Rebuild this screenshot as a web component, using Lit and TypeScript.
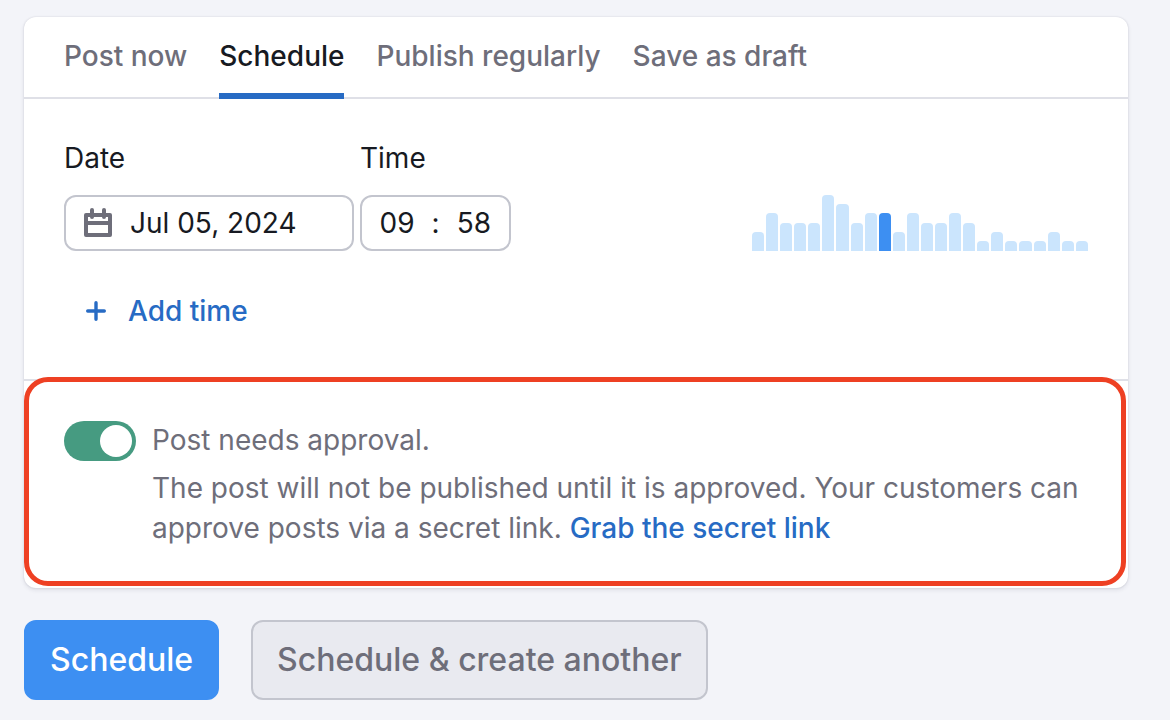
import { LitElement, html, css, svg } from "lit";
import { customElement, state } from "lit/decorators.js";
import { classMap } from "lit/directives/class-map.js";
import { styleMap } from "lit/directives/style-map.js";

const TABS = ["Post now", "Schedule", "Publish regularly", "Save as draft"];

/* Audience activity for each hour of the day, in pixels of bar height. */
const ACTIVITY = [
  19, 38, 28, 28, 28, 56, 47, 28, 38, 38, 19, 38,
  28, 28, 38, 28, 10, 19, 10, 10, 10, 19, 10, 10,
];

const calendarIcon = svg`
  <svg class="calendar" viewBox="0 0 28 30" aria-hidden="true">
    <path fill="currentColor" fill-rule="evenodd" d="M2 5h24a2 2 0 0 1 2 2v20a2 2 0 0 1-2 2H2a2 2 0 0 1-2-2V7a2 2 0 0 1 2-2zM4 9v4h20v-4zM4 17v8h20v-8z"/>
    <path stroke="currentColor" stroke-width="4" stroke-linecap="round" d="M8 2v7M20 2v7"/>
  </svg>`;

const plusIcon = svg`
  <svg class="plus" viewBox="0 0 20 20" aria-hidden="true">
    <path stroke="currentColor" stroke-width="3.4" stroke-linecap="round" d="M10 1.7v16.6M1.7 10h16.6"/>
  </svg>`;

@customElement("activity-chart")
class ActivityChart extends LitElement {
  static styles = css`
    :host {
      display: flex;
      align-items: flex-end;
      gap: 2px;
      width: 336px;
      height: 56px;
    }
    .bar {
      flex: 1;
      border-radius: 4px 4px 0 0;
      background: #cbe5fd;
    }
    .current {
      background: #3d8ff2;
    }
  `;

  render() {
    return ACTIVITY.map(
      (value, hour) => html`<div
        class=${classMap({ bar: true, current: hour === 9 })}
        style=${styleMap({ height: `${value}px` })}
      ></div>`
    );
  }
}

@customElement("app-root")
class AppRoot extends LitElement {
  @state() tab = "Schedule";

  static styles = css`
    :host {
      display: block;
      box-sizing: border-box;
      min-height: 100vh;
      padding: 17px 42px 20px 24px;
      background: #f3f4f9;
      color: #171a22;
      font: 400 28px/40px Inter, "Liberation Sans", sans-serif;
    }
    * {
      box-sizing: border-box;
    }
    button,
    input {
      margin: 0;
      padding: 0;
      border: 0;
      background: none;
      color: inherit;
      font: inherit;
      outline: none;
    }
    button {
      cursor: pointer;
    }
    svg {
      display: block;
      flex: none;
      fill: none;
    }
    .card {
      border-radius: 12px;
      background: #fff;
      box-shadow: 0 0 2px rgba(30, 30, 60, 0.14), 0 2px 4px rgba(30, 30, 60, 0.1);
    }
    .tabs {
      display: flex;
      gap: 32px;
      height: 82px;
      padding: 0 40px;
      border-bottom: 2px solid #dfe0e7;
    }
    .tab {
      height: 82px;
      padding-top: 2px;
      border-bottom: 6px solid transparent;
      color: #6e6e7a;
      font-weight: 500;
      white-space: nowrap;
    }
    .tab.active {
      border-color: #276bc4;
      color: #171a22;
    }
    .when {
      padding: 39px 40px 40px;
    }
    .row {
      display: flex;
      align-items: flex-end;
      gap: 6px;
    }
    .field {
      display: flex;
      flex-direction: column;
      gap: 17px;
    }
    .box {
      display: flex;
      align-items: center;
      height: 56px;
      border: 2px solid #c3c5ce;
      border-radius: 12px;
      background: #fff;
    }
    .date {
      gap: 18px;
      width: 290px;
      padding: 0 18px;
    }
    .date input {
      flex: 1;
      min-width: 0;
    }
    .calendar {
      width: 28px;
      height: 30px;
      color: #6e6e7a;
    }
    .time {
      justify-content: space-between;
      width: 151px;
      padding: 0 16px;
    }
    .time input {
      width: 38px;
      text-align: center;
    }
    .chart {
      margin-left: auto;
    }
    .add {
      display: flex;
      align-items: center;
      gap: 22px;
      height: 56px;
      margin-top: 32px;
      padding: 0 22px;
      color: #276bc4;
      font-weight: 500;
    }
    .plus {
      width: 20px;
      height: 20px;
    }
    .approval {
      position: relative;
      display: flex;
      gap: 16px;
      padding: 39px 40px;
      border-top: 2px solid #dfe0e7;
      color: #6e6e7a;
    }
    .highlight {
      position: absolute;
      inset: -4px 2px 2px 0;
      border: 5px solid #ee4023;
      border-radius: 24px;
      pointer-events: none;
    }
    .toggle {
      flex: none;
      appearance: none;
      width: 72px;
      height: 40px;
      margin-top: 1px;
      padding: 4px;
      border-radius: 20px;
      background: #b5b7c0;
      cursor: pointer;
    }
    .toggle::before {
      content: "";
      display: block;
      width: 32px;
      height: 32px;
      border-radius: 50%;
      background: #fff;
    }
    .toggle:checked {
      background: #469b81;
    }
    .toggle:checked::before {
      margin-left: auto;
    }
    .copy {
      display: flex;
      flex-direction: column;
      gap: 8px;
      padding-bottom: 1px;
    }
    .copy p {
      margin: 0;
    }
    a {
      color: #276bc4;
      font-weight: 500;
      text-decoration: none;
    }
    .actions {
      display: flex;
      gap: 32px;
      margin-top: 32px;
      font-size: 32px;
    }
    .action {
      height: 80px;
      padding: 0 24px;
      border: 2px solid #c3c5ce;
      border-radius: 12px;
      background: #e9eaf0;
      color: #6e6e7a;
      font-weight: 500;
    }
    .action.primary {
      border-color: #3d8ff2;
      background: #3d8ff2;
      color: #fff;
    }
  `;

  render() {
    return html`
      <section class="card">
        <nav class="tabs" role="tablist">
          ${TABS.map(
            (name) => html`<button
              role="tab"
              aria-selected=${name === this.tab}
              class=${classMap({ tab: true, active: name === this.tab })}
              @click=${() => (this.tab = name)}
            >${name}</button>`
          )}
        </nav>
        <div class="when">
          <div class="row">
            <div class="field">
              <label for="date">Date</label>
              <div class="box date">
                ${calendarIcon}
                <input id="date" type="text" value="Jul 05, 2024" />
              </div>
            </div>
            <div class="field">
              <label for="hour">Time</label>
              <div class="box time">
                <input id="hour" type="text" value="09" />
                <span>:</span>
                <input type="text" aria-label="Minutes" value="58" />
              </div>
            </div>
            <activity-chart class="chart"></activity-chart>
          </div>
          <button class="add">${plusIcon}Add time</button>
        </div>
        <div class="approval">
          <input id="approval" class="toggle" type="checkbox" role="switch" checked />
          <div class="copy">
            <label for="approval">Post needs approval.</label>
            <p>
              The post will not be published until it is approved. Your customers
              can approve posts via a secret link.
              <a href="#">Grab the secret link</a>
            </p>
          </div>
          <div class="highlight"></div>
        </div>
      </section>
      <div class="actions">
        <button class="action primary">Schedule</button>
        <button class="action">Schedule &amp; create another</button>
      </div>
    `;
  }
}
